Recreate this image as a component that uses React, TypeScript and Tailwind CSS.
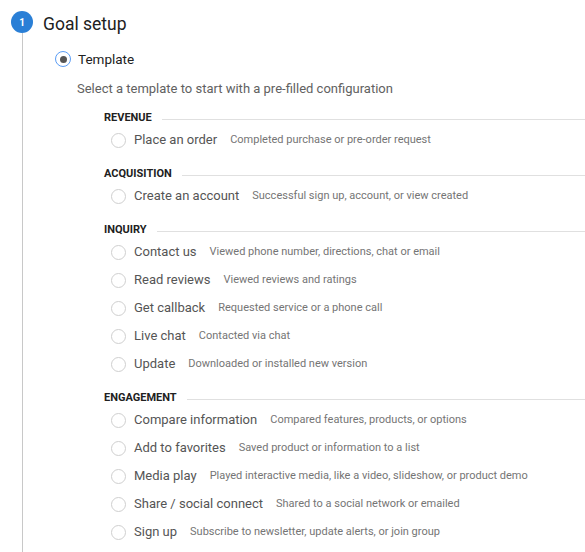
const groups = [
  {
    title: "Revenue",
    items: [["Place an order", "Completed purchase or pre-order request"]],
  },
  {
    title: "Acquisition",
    items: [["Create an account", "Successful sign up, account, or view created"]],
  },
  {
    title: "Inquiry",
    items: [
      ["Contact us", "Viewed phone number, directions, chat or email"],
      ["Read reviews", "Viewed reviews and ratings"],
      ["Get callback", "Requested service or a phone call"],
      ["Live chat", "Contacted via chat"],
      ["Update", "Downloaded or installed new version"],
    ],
  },
  {
    title: "Engagement",
    items: [
      ["Compare information", "Compared features, products, or options"],
      ["Add to favorites", "Saved product or information to a list"],
      ["Media play", "Played interactive media, like a video, slideshow, or product demo"],
      ["Share / social connect", "Shared to a social network or emailed"],
      ["Sign up", "Subscribe to newsletter, update alerts, or join group"],
    ],
  },
];

export default function App() {
  return (
    <div className="flex h-[552px] overflow-hidden bg-white pl-[11px] pt-[11px] font-['Roboto',sans-serif]">
      <div className="flex w-[22px] shrink-0 flex-col items-center">
        <div className="flex h-[22px] w-[22px] items-center justify-center rounded-full bg-[#2a7fd6] text-[10px] font-bold text-white">
          1
        </div>
        <div className="w-px flex-1 bg-[#c8c8c8]" />
      </div>

      <div className="flex-1">
        <div className="ml-[10px] flex h-[22px] items-center pt-[4px] text-[17.5px] text-[#212121]">Goal setup</div>

        <div className="ml-[22px] mt-[16px] flex h-[20px] items-center gap-[7px]">
          <span className="flex h-[16px] w-[16px] items-center justify-center rounded-full border-[1.5px] border-[#5b9df5]">
            <span className="h-[7px] w-[7px] rounded-full bg-[#555]" />
          </span>
          <span className="text-[13.5px] text-[#212121]">Template</span>
        </div>

        <div className="ml-[44px] mt-[10px] flex h-[20px] items-center text-[13px] text-[#616161]">
          Select a template to start with a pre-filled configuration
        </div>

        <div className="ml-[71px] mt-[11px] flex flex-col gap-[12px]">
          {groups.map((g) => (
            <section key={g.title}>
              <div className="flex h-[16px] items-center gap-[10px]">
                <h2 className="text-[11px] font-bold uppercase text-[#212121]">{g.title}</h2>
                <div className="mt-[3px] h-px flex-1 bg-[#e0e0e0]" />
              </div>
              {g.items.map(([label, desc]) => (
                <div key={label} className="ml-[7px] flex h-[28px] items-center">
                  <span className="h-[15px] w-[15px] shrink-0 rounded-full border border-[#cfcfcf]" />
                  <span className="ml-[8px] text-[13px] text-[#555]">{label}</span>
                  <span className="ml-[13px] text-[11px] text-[#757575]">{desc}</span>
                </div>
              ))}
            </section>
          ))}
        </div>
      </div>
    </div>
  );
}
